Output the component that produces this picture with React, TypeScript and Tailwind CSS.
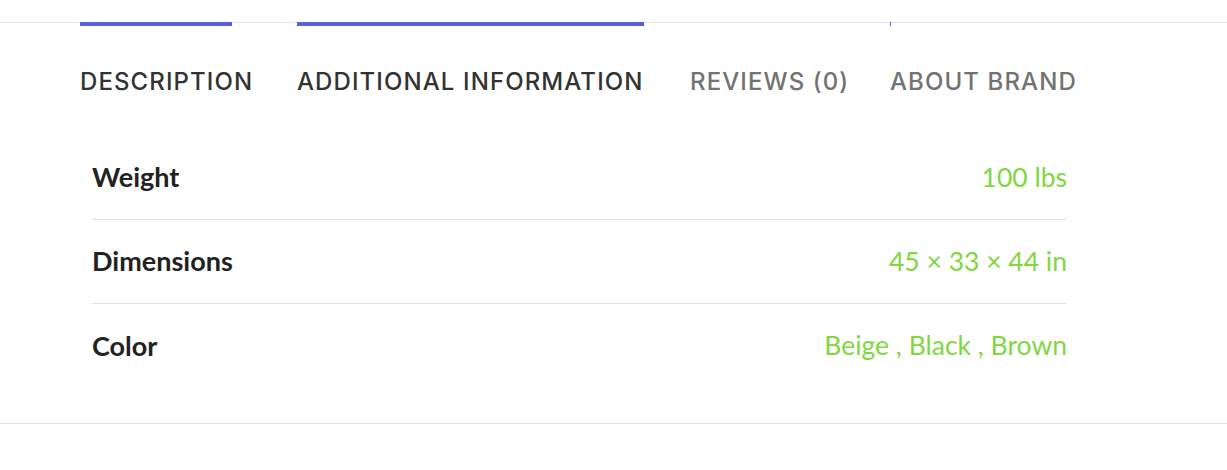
const tabs = [
  { label: 'DESCRIPTION', w: 'w-[171px]', bar: 'w-[152px]', dark: true },
  { label: 'ADDITIONAL INFORMATION', w: 'w-[347px]', bar: 'w-full', dark: true },
  { label: 'REVIEWS (0)', w: 'w-[154px]', bar: '', dark: false },
  { label: 'ABOUT BRAND', w: 'w-[189px]', bar: 'w-px', dark: false },
]

const rows = [
  { name: 'Weight', value: '100 lbs' },
  { name: 'Dimensions', value: '45 × 33 × 44 in' },
  { name: 'Color', value: 'Beige , Black , Brown' },
]

export default function App() {
  return (
    <div className="h-[470px] w-full overflow-hidden bg-white">
      <div className="h-[22px]" />
      <div className="border-t border-[#e4e4e4]">
        <ul className="flex gap-[46px] pl-[80px] font-['Inter',sans-serif]">
          {tabs.map((t) => (
            <li key={t.label} className={`relative ${t.w} pt-[48px] pb-[11px]`}>
              {t.bar && <span className={`absolute -top-px left-0 h-[4px] ${t.bar} bg-[#5b5fdb]`} />}
              <span
                className={`block whitespace-nowrap text-[24px] font-medium leading-[22px] tracking-[1.1px] ${
                  t.dark ? 'text-[#333333]' : 'text-[#727272]'
                }`}
              >
                {t.label}
              </span>
            </li>
          ))}
        </ul>
      </div>
      <div className="ml-[92px] mt-[32px] w-[975px] font-['Lato',sans-serif]">
        {rows.map((r, i) => (
          <div
            key={r.name}
            className={`flex h-[84px] items-center justify-between ${i < rows.length - 1 ? 'border-b border-[#e4e4e4]' : ''}`}
          >
            <span className="text-[27px] font-bold text-[#222222]">{r.name}</span>
            <span className="text-[26.5px] text-[#81d742]">{r.value}</span>
          </div>
        ))}
      </div>
      <div className="mt-[35px] border-t border-[#e4e4e4]" />
    </div>
  )
}
